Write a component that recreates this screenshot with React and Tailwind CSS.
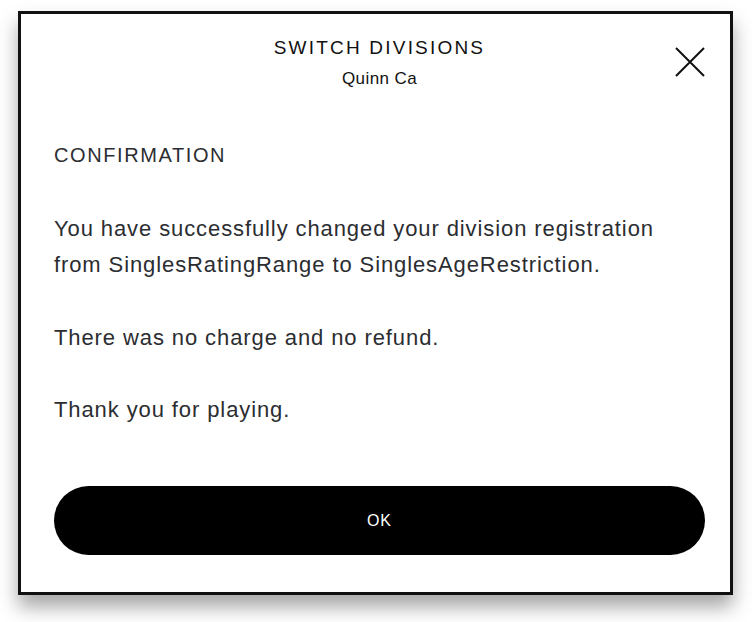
import React from "react";

export default function App() {
  return (
    <div className="min-h-screen bg-white pl-[18px] pt-[11px]" style={{ fontFamily: '"Liberation Sans", Arial, sans-serif' }}>
      <div className="w-[715px] border-[3px] border-[#111] bg-white pl-[33px] pr-[25px] pt-[22px] pb-[37px] shadow-[0_12px_18px_rgba(0,0,0,0.35)]">
        {/* Header */}
        <div className="relative text-center">
          <div className="text-[19px] leading-[24px] tracking-[2.2px] text-[#111]">SWITCH DIVISIONS</div>
          <div className="mt-[7px] text-[17px] leading-[24px] tracking-[0.4px] text-[#111]">Quinn Ca</div>
          <button className="absolute right-0 top-[11px] h-[30px] w-[30px]">
            <svg width="30" height="30" viewBox="0 0 30 30" fill="none" stroke="#111" strokeWidth="2">
              <path d="M1 1 L29 29 M29 1 L1 29" />
            </svg>
          </button>
        </div>

        <div className="mt-[51px] text-[20px] leading-[26px] tracking-[1.6px] text-[#2b2d31]">CONFIRMATION</div>

        <div className="text-[22px] leading-[36px] tracking-[0.9px] text-[#2b2d31]">
          <p className="mt-[43px]">
            You have successfully changed your division registration from SinglesRatingRange to SinglesAgeRestriction.
          </p>
          <p className="mt-[37px]">There was no charge and no refund.</p>
          <p className="mt-[36px]">Thank you for playing.</p>
        </div>

        <button className="mt-[58px] flex h-[69px] w-full items-center justify-center rounded-full bg-black text-[16px] tracking-[0.06em] text-white">
          OK
        </button>
      </div>
    </div>
  );
}
